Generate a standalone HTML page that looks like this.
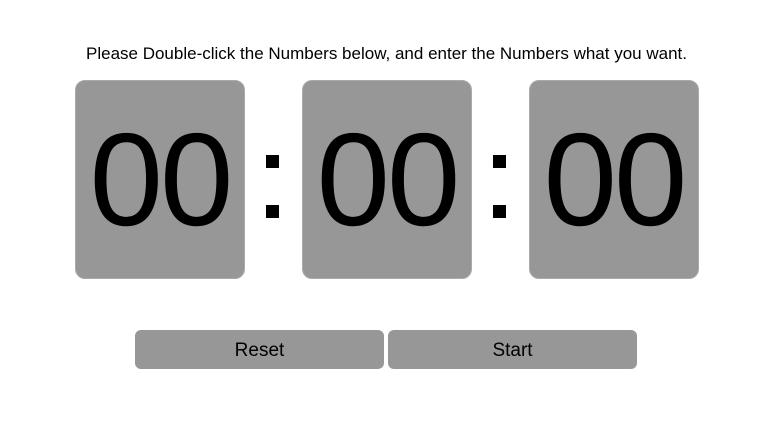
<!DOCTYPE html>
<html><head><style>
body{margin:0;width:778px;height:427px;background:#fff;font-family:"Liberation Sans",Arial,sans-serif;position:relative;overflow:hidden}
.t{position:absolute;left:0;width:773px;top:44px;text-align:center;font-size:17px;color:#000}
.b{position:absolute;top:80px;width:168px;height:197px;background:#979797;border:1px solid #aaa;border-radius:10px;text-align:center;font-size:132px;line-height:197px;color:#000;letter-spacing:-3px}
.s{position:absolute;width:13px;height:13px;background:#000}
.btn{position:absolute;top:330px;width:249px;height:39px;background:#979797;border-radius:6px;text-align:center;line-height:42px;font-size:19px;color:#000}
</style></head><body>
<div class="t">Please Double-click the Numbers below, and enter the Numbers what you want.</div>
<div class="b" style="left:75px">00</div>
<div class="b" style="left:302px">00</div>
<div class="b" style="left:529px">00</div>
<div class="s" style="left:266px;top:155px"></div>
<div class="s" style="left:266px;top:205px"></div>
<div class="s" style="left:493px;top:155px"></div>
<div class="s" style="left:493px;top:205px"></div>
<div class="btn" style="left:135px">Reset</div>
<div class="btn" style="left:388px">Start</div>
</body></html>
